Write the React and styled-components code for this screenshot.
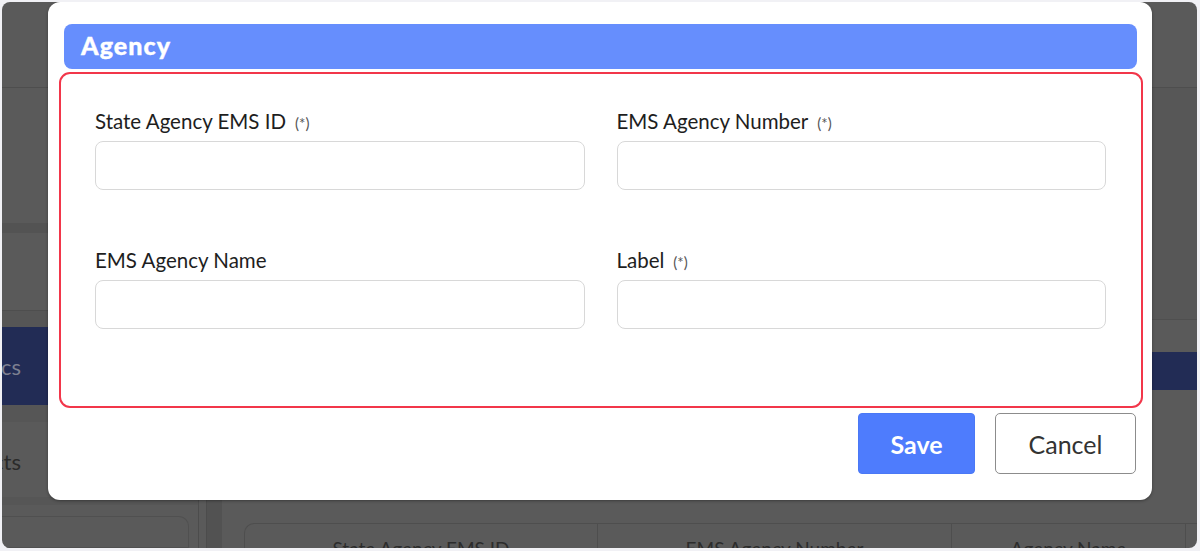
import React from 'react';
import styled, { createGlobalStyle } from 'styled-components';

const GlobalStyle = createGlobalStyle`
    html, body {
        margin: 0;
        padding: 0;
        background: #f1f1f5;
        font-family: Lato, "Liberation Sans", sans-serif;
    }
    * {
        box-sizing: border-box;
    }
`;

const fields = [
    { label: 'State Agency EMS ID', required: true },
    { label: 'EMS Agency Number', required: true },
    { label: 'EMS Agency Name', required: false },
    { label: 'Label', required: true },
];

const columns = ['State Agency EMS ID', 'EMS Agency Number', 'Agency Name', ''];

const App = () => {
    return (
        <>
            <GlobalStyle />
            <Frame>
                <Page>
                    <Sidebar>
                        <SideTop />
                        <SideBand />
                        <SideSection>
                            <NavItem active><NavText>Demographics</NavText></NavItem>
                            <NavItem><NavText>Contacts</NavText></NavItem>
                        </SideSection>
                        <SideBox />
                    </Sidebar>
                    <Scroller />
                    <Main>
                        <MainTop />
                        <MainMid />
                        <Tabs />
                        <MainBody>
                            <Table>
                                {columns.map((c, i) => (
                                    <Th key={i}>{c}</Th>
                                ))}
                            </Table>
                        </MainBody>
                    </Main>

                    <Modal>
                        <Header>Agency</Header>
                        <FormBox>
                            <Grid>
                                {fields.map((f) => (
                                    <Field key={f.label}>
                                        <Label>
                                            {f.label}
                                            {f.required && <Req>(*)</Req>}
                                        </Label>
                                        <Input type="text" />
                                    </Field>
                                ))}
                            </Grid>
                        </FormBox>
                        <Actions>
                            <Button primary>Save</Button>
                            <Button>Cancel</Button>
                        </Actions>
                    </Modal>
                </Page>
            </Frame>
        </>
    );
};

export default App;

const Frame = styled.div`
    width: 1200px;
    height: 551px;
    padding: 2px 3px 3px 2px;
`;

const Page = styled.div`
    position: relative;
    width: 100%;
    height: 100%;
    background: #5a5a5a;
    border-radius: 8px;
    overflow: hidden;
    display: flex;
`;

const Sidebar = styled.div`
    width: 197px;
    flex-shrink: 0;
    border-right: 1px solid #4c4c4c;
    display: flex;
    flex-direction: column;
    & > * {
        flex-shrink: 0;
    }
`;

const SideTop = styled.div`
    height: 86px;
    border-bottom: 1px solid #4e4e4e;
`;

const SideBand = styled.div`
    margin-top: 135px;
    height: 10px;
    background: #535353;
`;

const SideSection = styled.div`
    margin-top: 77px;
    border-top: 1px solid #4e4e4e;
    padding-top: 16px;
    display: flex;
    flex-direction: column;
    gap: 17px;
    background: #565656;
    padding-bottom: 8px;
`;

const NavItem = styled.div`
    height: ${(p) => (p.active ? '78px' : '75px')};
    background: ${(p) => (p.active ? '#222c55' : '#5a5a5a')};
    color: ${(p) => (p.active ? '#7d8090' : '#2a2a2a')};
    display: flex;
    align-items: center;
    font-size: 22px;
    padding-top: ${(p) => (p.active ? '0' : '4px')};
`;

const NavText = styled.span`
    width: 19px;
    display: flex;
    justify-content: flex-end;
    white-space: nowrap;
`;

const SideBox = styled.div`
    margin: 11px 9px 0 0;
    flex: 1 0 auto !important;
    border: 1px solid #505050;
    border-left: none;
    border-radius: 0 10px 0 0;
`;

const Scroller = styled.div`
    width: 16px;
    flex-shrink: 0;
    margin-left: 7px;
    background: #525252;
    border-left: 1px solid #4c4c4c;
`;

const Main = styled.div`
    flex: 1;
    display: flex;
    flex-direction: column;
    & > * {
        flex-shrink: 0;
    }
`;

const MainTop = styled.div`
    height: 86px;
    border-bottom: 1px solid #4e4e4e;
`;

const MainMid = styled.div`
    height: 232px;
    background: #575757;
    border-bottom: 1px solid #4f4f4f;
`;

const Tabs = styled.div`
    margin-top: 32px;
    height: 38px;
    background: #222c55;
`;

const MainBody = styled.div`
    padding: 133px 0 0 22px;
`;

const Table = styled.div`
    display: grid;
    grid-template-columns: 352px 354px 234px 1fr;
    height: 60px;
    border: 1px solid #4e4e4e;
    border-right: none;
    border-radius: 10px 0 0 0;
`;

const Th = styled.div`
    padding-top: 13px;
    text-align: center;
    font-size: 19px;
    color: #2c2c2c;
    border-left: 1px solid #4e4e4e;
    &:first-child {
        border-left: none;
    }
`;

const Modal = styled.div`
    position: absolute;
    top: 0;
    left: 46px;
    width: 1104px;
    height: 498px;
    background: #fff;
    border-radius: 12px;
    box-shadow: 0 1px 3px rgba(0, 0, 0, 0.35);
    padding: 22px 15px 0 16px;
    display: flex;
    flex-direction: column;
`;

const Header = styled.div`
    height: 45px;
    background: #668efd;
    border-radius: 8px;
    color: #fff;
    font-weight: 900;
    font-size: 25px;
    letter-spacing: 1.1px;
    padding-left: 17px;
    padding-bottom: 3px;
    display: flex;
    align-items: center;
    -webkit-text-stroke: 0.4px #fff;
`;

const FormBox = styled.div`
    margin: 3px -6px 0 -5px;
    height: 336px;
    border: 2px solid #f2364a;
    border-radius: 11px;
    padding: 35px 35px 0 34px;
`;

const Grid = styled.div`
    display: grid;
    grid-template-columns: 1fr 1fr;
    column-gap: 32px;
    row-gap: 58px;
`;

const Field = styled.div`
    display: flex;
    flex-direction: column;
`;

const Label = styled.label`
    display: block;
    height: 25px;
    font-size: 20.5px;
    line-height: 25px;
    color: #1e1e1e;
    margin-bottom: 7px;
`;

const Req = styled.span`
    font-size: 15px;
    line-height: 1;
    color: #555;
    margin-left: 9px;
`;

const Input = styled.input`
    height: 49px;
    border: 1px solid #d8d8d8;
    border-radius: 8px;
    background: #fff;
    outline: none;
    font-size: 18px;
    padding: 0 14px;
`;

const Actions = styled.div`
    margin-top: 5px;
    display: flex;
    justify-content: flex-end;
    gap: 20px;
    padding-right: 1px;
`;

const Button = styled.button`
    height: 61px;
    width: ${(p) => (p.primary ? '117px' : '141px')};
    font-family: Lato, "Liberation Sans", sans-serif;
    font-size: 25px;
    font-weight: ${(p) => (p.primary ? 700 : 400)};
    color: ${(p) => (p.primary ? '#fff' : '#333')};
    background: ${(p) => (p.primary ? '#4e7cfd' : '#fff')};
    border: ${(p) => (p.primary ? '1px solid #4a78f5' : '1.5px solid #8c8c8c')};
    border-radius: ${(p) => (p.primary ? '4px' : '5px')};
    cursor: pointer;
`;
